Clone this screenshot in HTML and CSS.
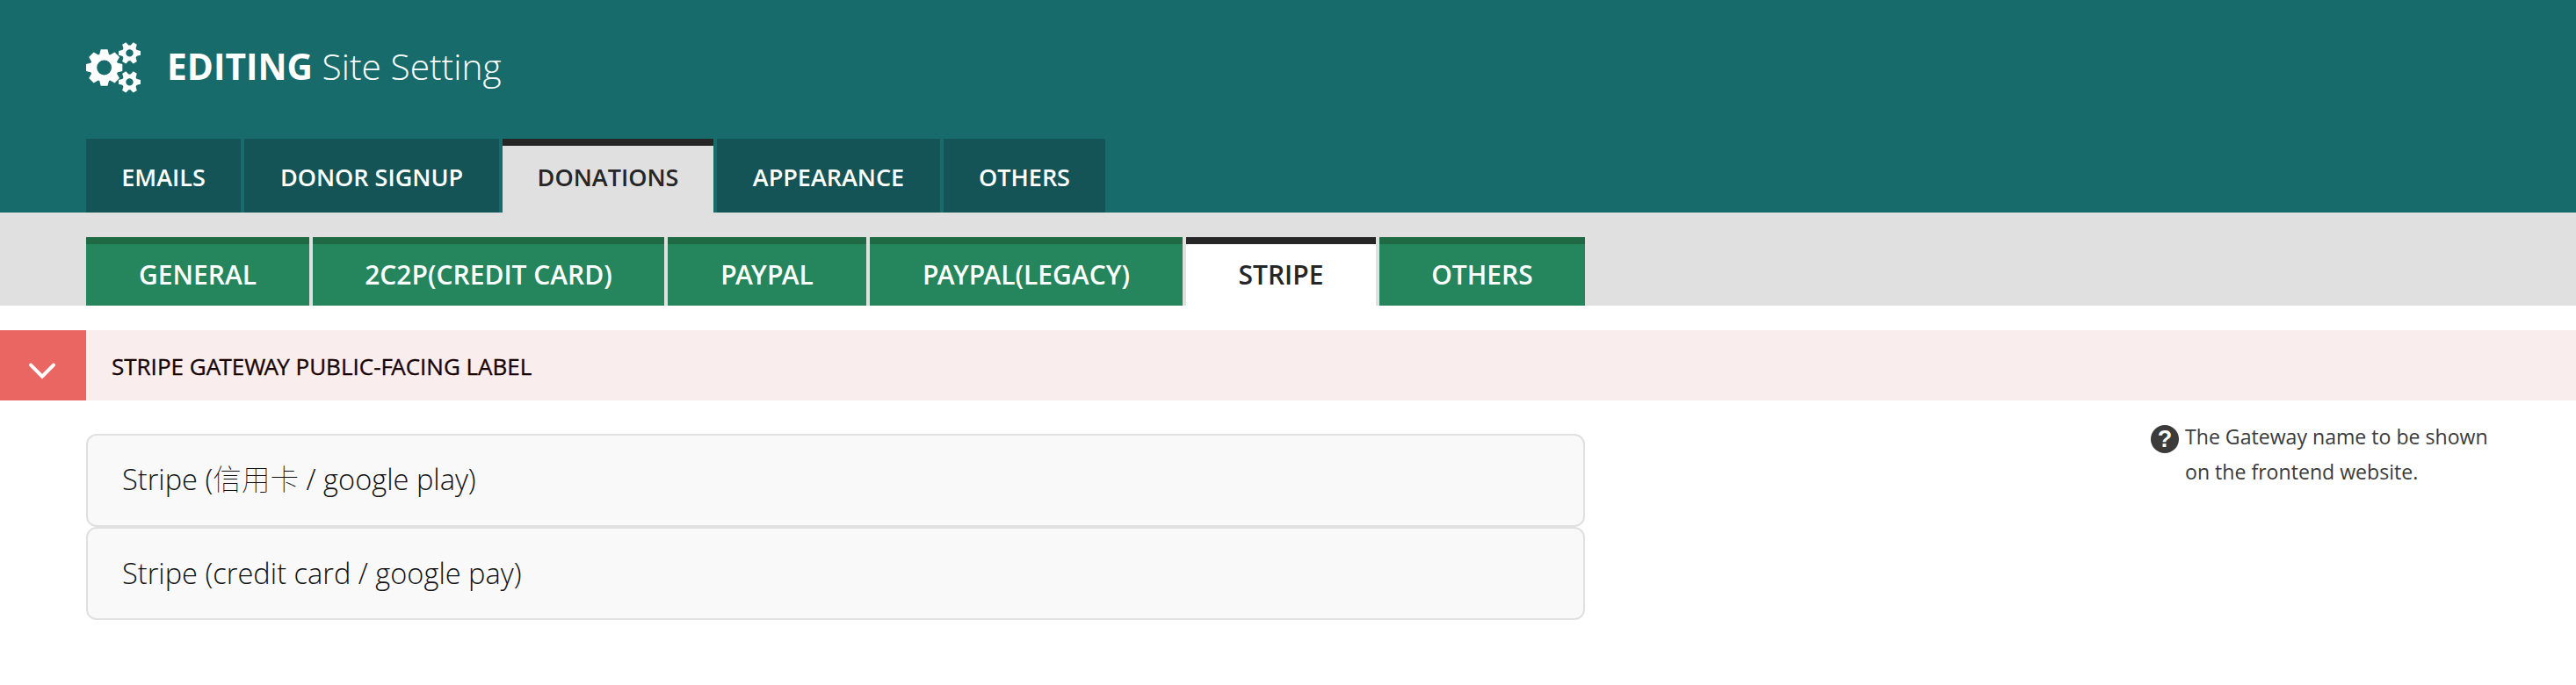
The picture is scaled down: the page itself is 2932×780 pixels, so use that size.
FILE: index.html
```html
<!DOCTYPE html>
<html lang="en">
<head>
<meta charset="utf-8">
<title>Editing Site Setting</title>
<link rel="stylesheet" href="styles.css">
</head>
<body>
<header class="header">
  <h1 class="title">
    <svg class="gears" width="64" height="60" viewBox="0 0 64 60" fill="#fff">
      <defs>
        <path id="tooth" d="M-5.5-14.5-3.9-20.7H3.9L5.5-14.5Z"/>
        <path id="cog" d="M7.4-3.7 12.5-2.4V2.4L7.4 3.7Z"/>
        <g id="small">
          <circle r="6.5" fill="none" stroke="#fff" stroke-width="4.6"/>
          <use href="#cog"/><use href="#cog" transform="rotate(60)"/><use href="#cog" transform="rotate(120)"/>
          <use href="#cog" transform="rotate(180)"/><use href="#cog" transform="rotate(240)"/><use href="#cog" transform="rotate(300)"/>
        </g>
      </defs>
      <g transform="translate(20.6 29)">
        <circle r="12.2" fill="none" stroke="#fff" stroke-width="7.6"/>
        <use href="#tooth"/><use href="#tooth" transform="rotate(45)"/><use href="#tooth" transform="rotate(90)"/><use href="#tooth" transform="rotate(135)"/>
        <use href="#tooth" transform="rotate(180)"/><use href="#tooth" transform="rotate(225)"/><use href="#tooth" transform="rotate(270)"/><use href="#tooth" transform="rotate(315)"/>
      </g>
      <use href="#small" transform="translate(49.5 12.4)"/>
      <use href="#small" transform="translate(49.5 45.4)"/>
    </svg>
    <span><strong>EDITING</strong> Site Setting</span>
  </h1>
  <nav class="tabs">
    <a class="tab w-emails">EMAILS</a>
    <a class="tab w-signup">DONOR SIGNUP</a>
    <a class="tab w-donations active">DONATIONS</a>
    <a class="tab w-appearance">APPEARANCE</a>
    <a class="tab w-others">OTHERS</a>
  </nav>
</header>
<nav class="subtabs">
  <a class="subtab w-general">GENERAL</a>
  <a class="subtab w-card">2C2P(CREDIT CARD)</a>
  <a class="subtab w-paypal"><span class="kern">PA</span>Y<span class="kern">P</span>AL</a>
  <a class="subtab w-legacy"><span class="kern">PA</span>Y<span class="kern">P</span>AL(LEGACY)</a>
  <a class="subtab w-stripe active">STRIPE</a>
  <a class="subtab w-more">OTHERS</a>
</nav>
<main>
  <section class="section-head">
    <span class="toggle"><svg width="98" height="80" viewBox="0 0 98 80" fill="none" stroke="#fff" stroke-width="4"><path d="M35 39.7 48 52.7 61 39.7" stroke-linecap="round"/></svg></span>
    <h2 class="section-title">STRIPE G<span class="kern">A</span>TE<span class="kern">WA</span>Y PUBLIC-<span class="kern">F</span>ACING LABEL</h2>
  </section>
  <div class="content">
    <div class="fields">
      <div class="field first">Stripe (<span class="cjk">信用卡</span> / google play)</div>
      <div class="field">Stripe (credit card / google pay)</div>
    </div>
    <aside class="help">
      <span class="help-icon">?</span>
      <p class="help-text">The Gateway name to be shown<br>on the frontend website.</p>
    </aside>
  </div>
</main>
</body>
</html>
```
FILE: styles.css
```css
* { box-sizing: border-box; }
body { margin: 0; background: #fff; font-family: "Open Sans", "Noto Sans CJK TC", sans-serif; color: #262626; }
.header { height: 242px; background: #186b6b; padding: 46px 98px 0; display: flex; flex-direction: column; justify-content: space-between; }
.title { margin: 0; display: flex; gap: 28px; height: 62px; padding-top: 2px; font-size: 40.7px; line-height: 54px; font-weight: 300; color: #fff; white-space: nowrap; }
.title strong { font-weight: 700; }
.gears { flex: none; }
.tabs, .subtabs { display: flex; gap: 4px; white-space: nowrap; font-weight: 600; }
.tab { height: 84px; border-top: 8px solid #145456; background: #145456; color: #fff; font-size: 27px; line-height: 71px; text-align: center; }
.tab.active { background: #e0e0e0; color: #262626; border-color: #262626; }
.w-emails { width: 176px; }
.w-signup { width: 290px; }
.w-donations { width: 240px; }
.w-appearance { width: 254px; }
.w-others { width: 184px; }
.subtabs { height: 106px; background: #e0e0e0; padding: 28px 98px 0; }
.subtab { height: 78px; border-top: 8px solid #1f6944; background: #25855c; color: #fff; font-size: 30px; line-height: 70px; text-align: center; }
.subtab.active { background: #fff; color: #262626; border-color: #262626; }
.kern { letter-spacing: -1.7px; }
.w-general { width: 254px; }
.w-card { width: 400px; }
.w-paypal { width: 226px; }
.w-legacy { width: 356px; }
.w-stripe { width: 216px; }
.w-more { width: 234px; }
.section-head { margin-top: 28px; height: 80px; background: #faeded; display: flex; }
.toggle { width: 98px; height: 80px; background: #ea6663; }
.section-title { margin: 0 0 0 29px; font-size: 26px; line-height: 82px; font-weight: 500; color: #190404; white-space: nowrap; -webkit-text-stroke: 0.35px #190404; }
.content { display: flex; justify-content: space-between; padding: 38px 98px 0; }
.fields { width: 1706px; }
.field { height: 106px; border: 2px solid #e0e0e0; border-radius: 12px; background: #f9f9f9; padding-left: 39px; color: #111; font-size: 32.6px; line-height: 102px; font-weight: 300; white-space: nowrap; }
.field.first { line-height: 100px; }
.cjk { font-family: "Noto Sans CJK TC", sans-serif; font-weight: 100; line-height: 1; }
.help { width: 386px; margin-top: -16px; display: flex; color: #3b3b3b; }
.help-icon { width: 32px; height: 32px; margin: 6px 7px 0 0; border-radius: 50%; background: #3b3b3b; color: #fff; font: bold 27px/33px "Liberation Sans", sans-serif; text-align: center; flex: none; }
.help-text { margin: -1px 0 0; font-size: 23.1px; line-height: 40px; white-space: nowrap; }
```
